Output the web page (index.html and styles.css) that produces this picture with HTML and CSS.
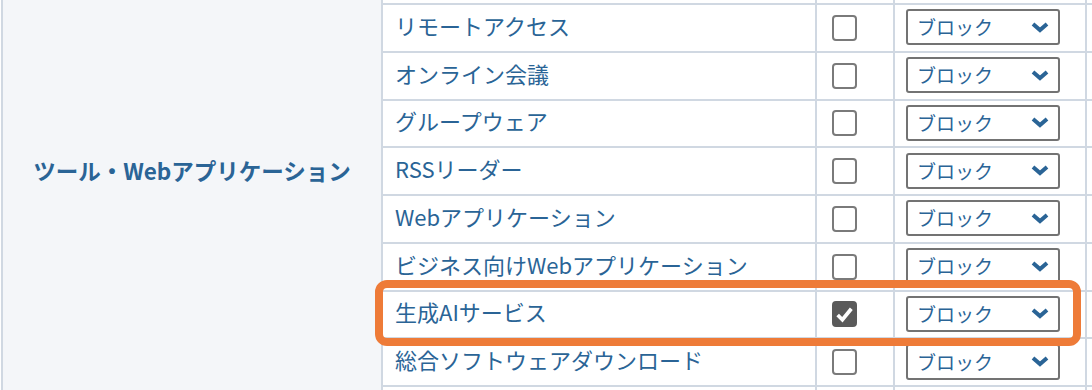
FILE: index.html
```html
<!DOCTYPE html>
<html lang="ja">
<head>
    <meta charset="UTF-8">
    <meta name="viewport" content="width=device-width, initial-scale=1.0">
    <title>Webフィルター</title>
    <link rel="stylesheet" href="styles.css">
</head>
<body>
    <div class="grid">
        <div class="group"><span class="group-label">ツール・Webアプリケーション</span></div>

        <div class="cell"></div><div class="cell"></div><div class="cell"></div><div class="cell"></div>

        <div class="cell name">リモートアクセス</div>
        <div class="cell chk"><span class="box"></span></div>
        <div class="cell sel"><div class="select"><span>ブロック</span><svg viewBox="0 0 20 12"><path d="M3 3 L10 9 L17 3" /></svg></div></div>
        <div class="cell"></div>

        <div class="cell name">オンライン会議</div>
        <div class="cell chk"><span class="box"></span></div>
        <div class="cell sel"><div class="select"><span>ブロック</span><svg viewBox="0 0 20 12"><path d="M3 3 L10 9 L17 3" /></svg></div></div>
        <div class="cell"></div>

        <div class="cell name">グループウェア</div>
        <div class="cell chk"><span class="box"></span></div>
        <div class="cell sel"><div class="select"><span>ブロック</span><svg viewBox="0 0 20 12"><path d="M3 3 L10 9 L17 3" /></svg></div></div>
        <div class="cell"></div>

        <div class="cell name">RSSリーダー</div>
        <div class="cell chk"><span class="box"></span></div>
        <div class="cell sel"><div class="select"><span>ブロック</span><svg viewBox="0 0 20 12"><path d="M3 3 L10 9 L17 3" /></svg></div></div>
        <div class="cell"></div>

        <div class="cell name">Webアプリケーション</div>
        <div class="cell chk"><span class="box"></span></div>
        <div class="cell sel"><div class="select"><span>ブロック</span><svg viewBox="0 0 20 12"><path d="M3 3 L10 9 L17 3" /></svg></div></div>
        <div class="cell"></div>

        <div class="cell name">ビジネス向けWebアプリケーション</div>
        <div class="cell chk"><span class="box"></span></div>
        <div class="cell sel"><div class="select"><span>ブロック</span><svg viewBox="0 0 20 12"><path d="M3 3 L10 9 L17 3" /></svg></div></div>
        <div class="cell"></div>

        <div class="cell name">生成AIサービス</div>
        <div class="cell chk"><span class="box checked"><svg viewBox="0 0 20 20"><path d="M3.5 10.5 L8 15 L16.5 4.5" /></svg></span></div>
        <div class="cell sel"><div class="select"><span>ブロック</span><svg viewBox="0 0 20 12"><path d="M3 3 L10 9 L17 3" /></svg></div></div>
        <div class="cell"></div>

        <div class="cell name">総合ソフトウェアダウンロード</div>
        <div class="cell chk"><span class="box"></span></div>
        <div class="cell sel"><div class="select"><span>ブロック</span><svg viewBox="0 0 20 12"><path d="M3 3 L10 9 L17 3" /></svg></div></div>
        <div class="cell"></div>

        <div class="cell"></div><div class="cell"></div><div class="cell"></div><div class="cell"></div>

        <div class="highlight"></div>
    </div>
</body>
</html>
```

FILE: styles.css
```css
body {
    margin: 0;
    height: 390px;
    overflow: hidden;
    background: #fff;
    font-family: "Noto Sans CJK JP", "Noto Sans", sans-serif;
    color: #2a6496;
}
.grid {
    position: relative;
    display: grid;
    grid-template-columns: 378px 432px 76px 190px 1fr;
    grid-template-rows: 3px repeat(8, 45.75px) 3px;
    gap: 2px;
    margin-left: 1px;
    padding-left: 2px;
    background: #d0d8e2;
}
.group {
    grid-column: 1;
    grid-row: 1 / -1;
    background: #f4f6f9;
    text-align: center;
    padding-top: 154px;
}
.group-label {
    font-size: 22.5px;
    font-weight: bold;
}
.cell {
    background: #fff;
    display: flex;
    align-items: center;
}
.name {
    padding-left: 12px;
    font-size: 22px;
    padding-bottom: 6px;
    white-space: nowrap;
}
.chk {
    padding-left: 15px;
}
.box {
    box-sizing: border-box;
    width: 25px;
    height: 26px;
    border: 2px solid #7a7a7a;
    border-radius: 4px;
    display: flex;
    align-items: center;
    justify-content: center;
}
.box.checked {
    background: #5a5a5a;
    border-color: #5a5a5a;
}
.box svg {
    width: 21px;
    height: 21px;
    fill: none;
    stroke: #fff;
    stroke-width: 3.5;
}
.sel {
    padding-left: 11px;
    padding-bottom: 1px;
}
.select {
    box-sizing: border-box;
    width: 154px;
    height: 36px;
    border: 2px solid #737373;
    border-radius: 3px;
    display: flex;
    align-items: center;
    justify-content: space-between;
    padding: 0 8px 1px 9px;
    font-size: 19px;
}
.select svg {
    width: 20px;
    height: 12px;
    fill: none;
    stroke: #2a6496;
    stroke-width: 4;
}
.highlight {
    position: absolute;
    grid-column: 2 / 5;
    grid-row: 8 / 9;
    top: -11.5px;
    bottom: -9px;
    left: -8px;
    right: 4px;
    border: 8px solid #ee7b38;
    border-radius: 12px;
}
```
